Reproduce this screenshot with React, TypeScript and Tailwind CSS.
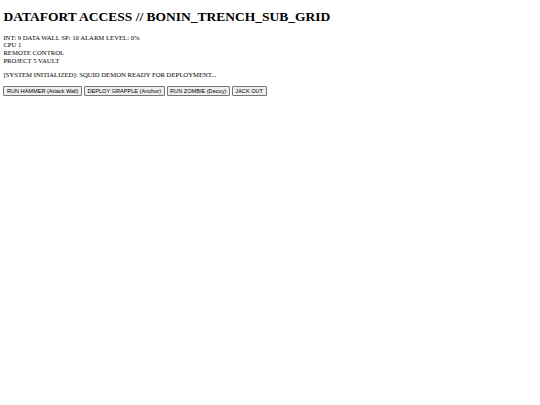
export default function App() {
  return (
    <div className="px-[3.4px] pt-[0.1px] font-['Liberation_Serif',serif] text-black bg-white min-h-[405px]">
      <h1 className="text-[13.5px] font-bold mt-[9px] mb-[9px] leading-[1.15]">DATAFORT ACCESS // BONIN_TRENCH_SUB_GRID</h1>
      <div className="text-[6.7px] leading-[1.15]">
        <div>INT: 9 DATA WALL SP: 10 ALARM LEVEL: 0%</div>
        <div>CPU 1</div>
        <div>REMOTE CONTROL</div>
        <div>PROJECT 5 VAULT</div>
      </div>
      <p className="text-[6.7px] leading-[1.15] my-[6.7px]">[SYSTEM INITIALIZED]: SQUID DEMON READY FOR DEPLOYMENT...</p>
      <div className="flex gap-[2px]">
        {["RUN HAMMER (Attack Wall)", "DEPLOY GRAPPLE (Anchor)", "RUN ZOMBIE (Decoy)", "JACK OUT"].map((t) => (
          <button key={t} className="font-['Liberation_Sans',sans-serif] text-[5.6px] leading-[1.15] px-[2.5px] py-[1px] border-[0.5px] border-[#767676] bg-[#efefef] rounded-[1px] text-black">
            {t}
          </button>
        ))}
      </div>
    </div>
  );
}
